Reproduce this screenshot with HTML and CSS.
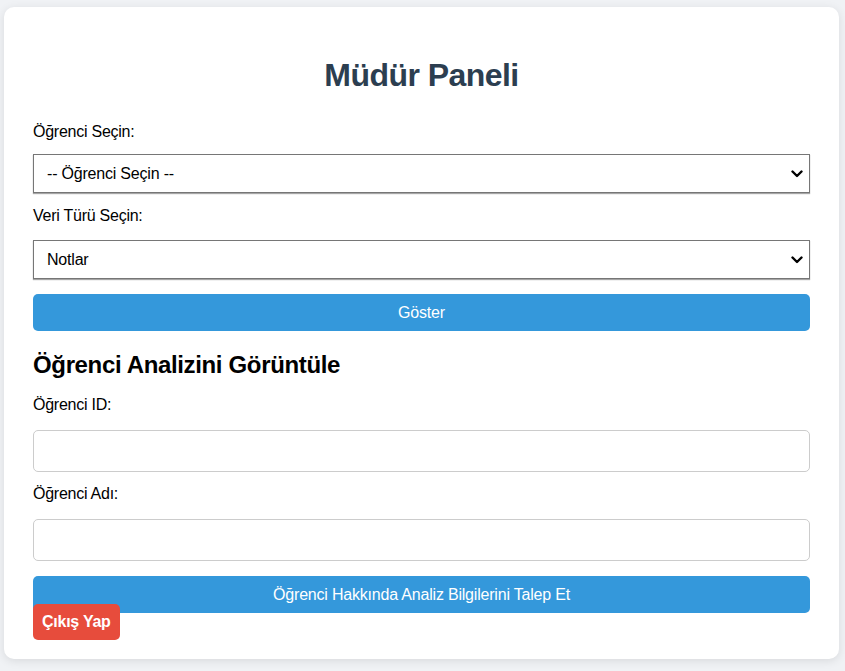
FILE: index.html
```html
<!DOCTYPE html>
<html lang="tr">
<head>
<meta charset="utf-8">
<title>Müdür Paneli</title>
<link rel="stylesheet" href="styles.css">
</head>
<body>
<div class="card">
  <h1 class="title">Müdür Paneli</h1>
  <label class="label label-first" for="ogr">Öğrenci Seçin:</label>
  <select class="select" id="ogr">
    <option>-- Öğrenci Seçin --</option>
  </select>
  <label class="label" for="tur">Veri Türü Seçin:</label>
  <select class="select select-last" id="tur">
    <option>Notlar</option>
  </select>
  <button class="btn">Göster</button>
  <h3 class="subtitle">Öğrenci Analizini Görüntüle</h3>
  <label class="label label-id" for="sid">Öğrenci ID:</label>
  <input class="input" id="sid" type="text">
  <label class="label" for="sad">Öğrenci Adı:</label>
  <input class="input" id="sad" type="text">
  <button class="btn btn-request">Öğrenci Hakkında Analiz Bilgilerini Talep Et</button>
  <button class="logout">Çıkış Yap</button>
</div>
</body>
</html>
```
FILE: styles.css
```css
html, body {
  margin: 0;
  padding: 0;
}
body {
  background: #f0f2f5;
  font-family: "Liberation Sans", Arial, sans-serif;
  font-size: 16px;
  color: #000;
  padding: 7px 6px 11px 4px;
}
.card {
  position: relative;
  background: #fff;
  border-radius: 10px;
  box-shadow: 0 2px 10px rgba(0, 0, 0, 0.1);
  padding: 29px 29px 46px 29px;
  display: flex;
  flex-direction: column;
}
.title {
  text-align: center;
  color: #2c3e50;
  font-size: 32px;
  font-weight: bold;
  letter-spacing: -0.55px;
  margin: 21px 0 21px;
  line-height: 37px;
}
.label {
  display: block;
  line-height: 18px;
  letter-spacing: -0.25px;
  margin: 14px 0 15px;
}
.label-first {
  margin-top: 8px;
  margin-bottom: 13px;
}
.label-id {
  margin-top: 17px;
  margin-bottom: 16px;
}
.select {
  -webkit-appearance: none;
  appearance: none;
  font-family: "Liberation Sans", Arial, sans-serif;
  font-size: 16px;
  letter-spacing: -0.2px;
  height: 39px;
  padding: 0 30px 0 13px;
  border: 1px solid #767676;
  border-radius: 0;
  background-color: #fff;
  background-image: url("data:image/svg+xml,%3Csvg xmlns='http://www.w3.org/2000/svg' width='12' height='8' viewBox='0 0 12 8'%3E%3Cpath d='M1.5 1.5 L6 6 L10.5 1.5' fill='none' stroke='%23000' stroke-width='2.4' stroke-linecap='round' stroke-linejoin='round'/%3E%3C/svg%3E");
  background-repeat: no-repeat;
  background-position: right 6px center;
  background-size: 12px 8px;
  color: #000;
  box-shadow: 0 1px 1px rgba(0, 0, 0, 0.35);
  margin: 0;
}
.select-last {
  margin-bottom: 15px;
}
.btn {
  font-family: "Liberation Sans", Arial, sans-serif;
  font-size: 16px;
  letter-spacing: -0.2px;
  color: #fff;
  background: #3498db;
  border: none;
  border-radius: 5px;
  height: 37px;
  padding: 0 10px;
  margin: 0;
}
.subtitle {
  font-size: 24px;
  font-weight: bold;
  letter-spacing: -0.35px;
  line-height: 28px;
  margin: 20px 0 0;
}
.input {
  font-family: "Liberation Sans", Arial, sans-serif;
  font-size: 16px;
  height: 42px;
  box-sizing: border-box;
  border: 1px solid #ccc;
  border-radius: 5px;
  padding: 10px;
  margin: 0;
}
.input + .label {
  margin-top: 13px;
  margin-bottom: 16px;
}
.btn-request {
  margin-top: 15px;
}
.logout {
  position: absolute;
  left: 29px;
  bottom: 19px;
  font-family: "Liberation Sans", Arial, sans-serif;
  font-size: 16px;
  font-weight: bold;
  letter-spacing: -0.25px;
  color: #fff;
  background: #e74c3c;
  border: none;
  border-radius: 5px;
  height: 36px;
  padding: 0 9px;
}
```
